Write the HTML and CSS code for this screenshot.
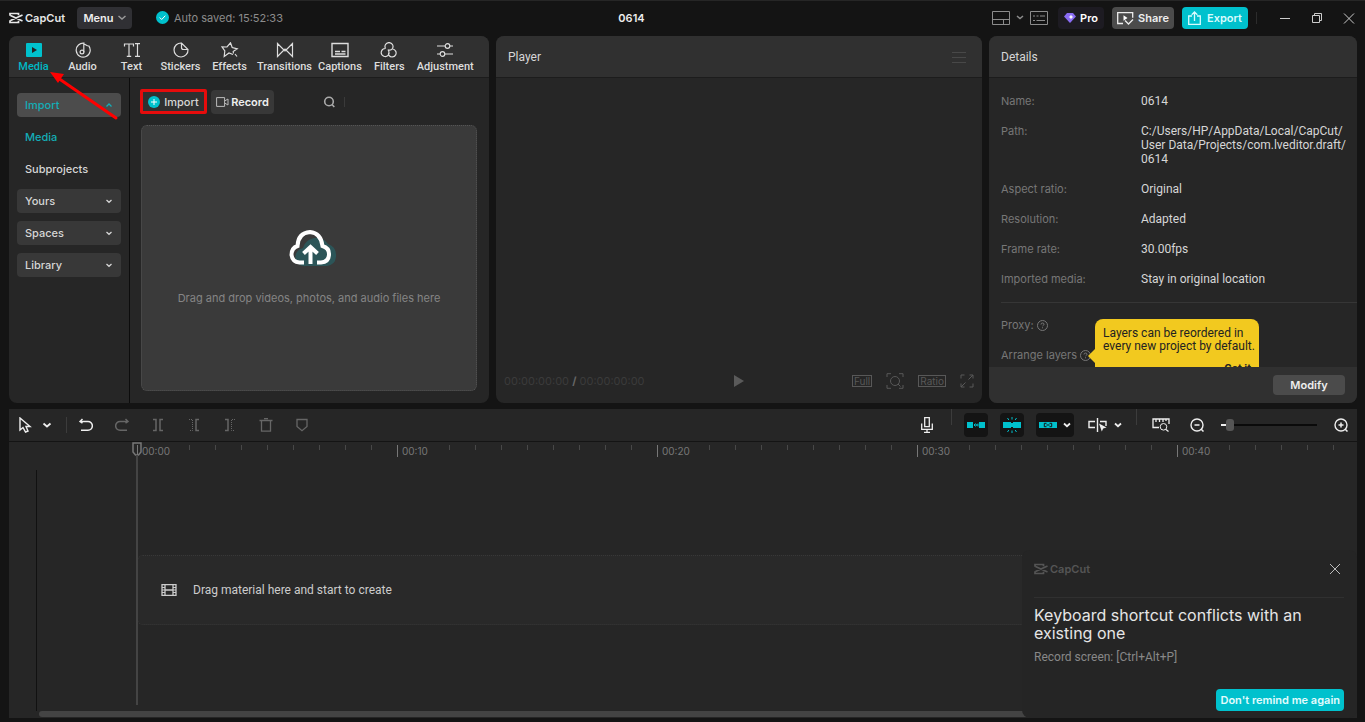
FILE: index.html
```
<!DOCTYPE html>
<html lang="en">
<head>
  <meta charset="UTF-8" />
  <meta name="viewport" content="width=device-width, initial-scale=1" />
  <title>CapCut - 0614</title>
  <link rel="stylesheet" href="styles.css">
</head>
<body>
  <header class="topbar">
    <div class="brand">
      <svg width="14" height="12" viewBox="0 0 14 12"><path d="M1 3.800V1.500h8.500v1.700M1 8.200v2.300h8.500V8.800M1.500 3.500l12 5.500M1.500 8.500l12-5.500"/></svg>
      <span>CapCut</span>
    </div>
    <button class="menu-btn">Menu
      <svg width="8" height="5" viewBox="0 0 8 5"><path d="M.5 1L4 4l3.500-3"/></svg>
    </button>
    <div class="saved">
      <svg width="13" height="13" viewBox="0 0 13 13"><circle cx="6.500" cy="6.500" r="6.500" fill="#00c1cd" stroke="none"/><path d="M3.700 6.500l2 2 3.600-3.800" stroke="#fff"/></svg>
      <span>Auto saved: 15:52:33</span>
    </div>
    <h1 class="project-name">0614</h1>
    <div class="top-actions">
      <button class="icon-btn layout-btn" aria-label="Layout">
        <svg width="18" height="14" viewBox="0 0 18 14"><path d="M.5.500h17v13H.5zM.5 8.500h17M11.500 8.500v5"/></svg>
        <svg width="8" height="14" viewBox="0 0 8 14"><path d="M1 5l3 2.500L7 5" stroke-width="1.500"/></svg>
      </button>
      <button class="icon-btn" aria-label="Shortcuts">
        <svg width="18" height="14" viewBox="0 0 18 14"><path d="M.5.500h17v13H.5zM3 5h2M6.500 5h2M10 5h5M3 9.500h2M6.500 9.500H15"/></svg>
      </button>
      <button class="btn pro">
        <svg width="12" height="10" viewBox="0 0 12 10"><path d="M3 0h6l3 3.500L6 10 0 3.500z" fill="#8a6cf5" stroke="none"/><path d="M7 1.500l.8 1.700 1.700.8-1.700.8L7 6.500l-.8-1.700L4.500 4l1.700-.8z" fill="#fff" stroke="none"/></svg>
        Pro
      </button>
      <button class="btn share">
        <svg width="17" height="14" viewBox="0 0 17 14"><path d="M6 12.500H.7V1.700h15v5M8 9.500l3.500 3.500 4.500-4.500" stroke-width="1.300"/><path d="M6.500 4.300l4 2.700-4 2.700z" fill="#fff" stroke="none"/></svg>
        Share
      </button>
      <button class="btn export">
        <svg width="13" height="14" viewBox="0 0 13 14"><path d="M4 5H.7v8.300h11.600V5H9M6.500 10V1M3.700 3.700L6.500 1l2.800 2.700" stroke-width="1.300"/></svg>
        Export
      </button>
      <span class="top-sep"></span>
      <button class="icon-btn win" aria-label="Minimize">
        <svg width="16" height="16" viewBox="0 0 16 16"><path d="M3 8.500h10"/></svg>
      </button>
      <button class="icon-btn win" aria-label="Restore">
        <svg width="16" height="16" viewBox="0 0 16 16"><path d="M3.500 5.500h7v7h-7zM5.500 5.500v-2h7v7h-2"/></svg>
      </button>
      <button class="icon-btn win" aria-label="Close">
        <svg width="16" height="16" viewBox="0 0 16 16"><path d="M3 3.500l10 10M13 3.500l-10 10"/></svg>
      </button>
    </div>
  </header>

  <main class="workspace">
    <section class="panel media-panel">
      <nav class="tabs">
        <button class="tab active">
          <svg width="18" height="16" viewBox="0 0 18 16"><rect x="1" y="1" width="16" height="14" rx="1" fill="#00c1cd" stroke="none"/><path d="M7 5l5 3-5 3z" fill="#222" stroke="none"/></svg>
          Media
        </button>
        <button class="tab">
          <svg width="18" height="16" viewBox="0 0 18 16"><path d="M10.500 1.200A7 7 0 1 0 14.500 3.500M9.800 10.300V1.800l4 2.200"/><circle cx="8" cy="10" r="1.900"/></svg>
          Audio
        </button>
        <button class="tab">
          <svg width="18" height="16" viewBox="0 0 18 16"><path d="M1.500 4.500V2h9v2.500M6 2v12M3.800 14.300h4.400M12 1.700h5M14.500 2v12M12 14.300h5"/></svg>
          Text
        </button>
        <button class="tab">
          <svg width="18" height="16" viewBox="0 0 18 16"><path d="M9.500 1a7 7 0 1 0 6.500 6.500zM9.500 1v4.500q0 2 2 2H16"/></svg>
          Stickers
        </button>
        <button class="tab">
          <svg width="18" height="16" viewBox="0 0 18 16"><path d="M12 12.500L8 11l-4.800 3.500.6-5.500L1 4.800l5 .2L9.500.8l1.700 4.700 5 1.300-4 2.700.3 2M14 12l2 2.500"/></svg>
          Effects
        </button>
        <button class="tab">
          <svg width="18" height="16" viewBox="0 0 18 16"><path d="M1.500 1.500v13L8 8zM16.500 1.500v13L10 8zM8 8l1 1 1-1M7 9l2-2 2 2"/></svg>
          Transitions
        </button>
        <button class="tab">
          <svg width="18" height="16" viewBox="0 0 18 16"><path d="M1 1.500h16v13H1zM4 9.500h5M10.500 9.500h4M4 12h10.500" stroke-width="1.400"/></svg>
          Captions
        </button>
        <button class="tab">
          <svg width="18" height="16" viewBox="0 0 18 16"><path d="M5.500 6.500a4 4 0 1 1 7 0q-1.500 2.300-4 1.500M5.500 6.500a4 4 0 1 0 3.200 6q1-2-.7-5M12.500 7a4 4 0 1 1-3.500 6.500q-1-1 0-3"/></svg>
          Filters
        </button>
        <button class="tab">
          <svg width="18" height="16" viewBox="0 0 18 16"><path d="M1 4h8M14 4h3M1 12h3M9 12h8"/><circle cx="11.500" cy="4" r="2.300"/><circle cx="6.500" cy="12" r="2.300"/></svg>
          Adjustment
        </button>
      </nav>
      <div class="media-body">
        <aside class="side">
          <button class="side-item selected">Import <svg width="8" height="6" viewBox="0 0 8 6"><path d="M1.500 4.500L4 2l2.500 2.500"/></svg></button>
          <a href="#" class="side-link current">Media</a>
          <a href="#" class="side-link">Subprojects</a>
          <button class="side-item">Yours <svg width="8" height="6" viewBox="0 0 8 6"><path d="M1.500 2L4 4.300 6.500 2"/></svg></button>
          <button class="side-item">Spaces <svg width="8" height="6" viewBox="0 0 8 6"><path d="M1.500 2L4 4.300 6.500 2"/></svg></button>
          <button class="side-item">Library <svg width="8" height="6" viewBox="0 0 8 6"><path d="M1.500 2L4 4.300 6.500 2"/></svg></button>
        </aside>
        <div class="library">
          <div class="library-bar">
            <button class="small-btn import-btn">
              <svg width="12" height="12" viewBox="0 0 12 12"><circle cx="6" cy="6" r="6" fill="#00c1cd" stroke="none"/><path d="M3 6h6M6 3v6" stroke="#fff"/></svg>
              Import
            </button>
            <button class="small-btn record-btn">
              <svg width="13" height="10" viewBox="0 0 13 10"><path d="M.6.600h8v8.800h-8zM8.600 4l3.400-2v6L8.600 6" stroke="#bbb"/></svg>
              Record
            </button>
            <button class="icon-btn search-btn" aria-label="Search">
              <svg width="12" height="12" viewBox="0 0 12 12"><circle cx="6" cy="5.500" r="4.300"/><path d="M9 8.500l2.300 2.500"/></svg>
            </button>
            <span class="search-sep"></span>
          </div>
          <div class="dropzone">
            <svg class="cloud" width="55" height="38" viewBox="-6 0 55 38">
              <path d="M18 37a9 9 0 0 1-3-18A14 14 0 0 1 40 15q9 3 8 13-1 8-9 9z" fill="#2c5558"/>
              <path d="M16 33.500h-4.500q-7-.5-8-7.500 0-7 6-9Q10 4 22 3q11 1 12.500 14 7 2 6.500 9-.5 7-8 7.500H29" fill="none" stroke="#fff" stroke-width="4"/>
              <path d="M22.500 35V19M15.500 24.500l7-6.500 7 6.500" fill="none" stroke="#fff" stroke-width="4"/>
            </svg>
            <p>Drag and drop videos, photos, and audio files here</p>
          </div>
        </div>
      </div>
      <svg class="arrow" width="72" height="52" viewBox="0 0 72 52"><path d="M8 6l58 40" stroke="#f00" stroke-width="3" stroke-linecap="round"/><path d="M0 0l14 2-6 9z" fill="#f00"/></svg>
    </section>

    <section class="panel player-panel">
      <div class="panel-head">
        <h2>Player</h2>
        <button class="icon-btn dim" aria-label="Player menu">
          <svg width="14" height="12" viewBox="0 0 14 12"><path d="M0 1.500h14M0 6.500h14M0 11.500h14"/></svg>
        </button>
      </div>
      <div class="screen"></div>
      <div class="player-bar">
        <span class="time">00:00:00:00 <b>/</b> 00:00:00:00</span>
        <button class="icon-btn play" aria-label="Play">
          <svg width="12" height="14" viewBox="0 0 12 14"><path d="M1 1l10 6-10 6z" fill="#5a5a5a" stroke="none"/></svg>
        </button>
        <div class="player-tools">
          <button class="tag">Full</button>
          <button class="icon-btn" aria-label="Zoom to fit">
            <svg width="18" height="16" viewBox="0 0 18 16"><path d="M1 4V.700h4M13 .700h4V4M1 12v3.300h4M13 15.300h4V12M12 11l2.500 2.500"/><circle cx="9" cy="8" r="4.500"/></svg>
          </button>
          <button class="tag">Ratio</button>
          <button class="icon-btn" aria-label="Full screen">
            <svg width="14" height="14" viewBox="0 0 14 14"><path d="M1 4.500V1h3.500M9.500 1H13v3.500M13 9.500V13H9.500M4.500 13H1V9.500M8.500 5.500L13 1M5.500 8.500L1 13"/></svg>
          </button>
        </div>
      </div>
    </section>

    <section class="panel details-panel">
      <div class="panel-head"><h2>Details</h2></div>
      <div class="details-body">
        <dl class="props">
          <dt>Name:</dt><dd>0614</dd>
          <dt>Path:</dt><dd>C:/Users/HP/AppData/Local/CapCut/<wbr>User Data/Projects/com.lveditor.draft/<wbr>0614</dd>
          <dt>Aspect ratio:</dt><dd>Original</dd>
          <dt>Resolution:</dt><dd>Adapted</dd>
          <dt>Frame rate:</dt><dd>30.00fps</dd>
          <dt>Imported media:</dt><dd>Stay in original location</dd>
        </dl>
        <div class="extra">
          <div class="extra-row">Proxy:
            <svg width="11" height="11" viewBox="0 0 11 11"><circle cx="5.500" cy="5.500" r="5"/><path d="M4 4.500q0-1.500 1.500-1.500T7 4.300q0 .8-1.500 1.700M5.500 7.300v1"/></svg>
          </div>
          <div class="extra-row">Arrange layers
            <svg width="11" height="11" viewBox="0 0 11 11"><circle cx="5.500" cy="5.500" r="5"/><path d="M4 4.500q0-1.500 1.500-1.500T7 4.300q0 .8-1.500 1.700M5.500 7.300v1"/></svg>
          </div>
          <div class="tip">
            <p>Layers can be reordered in every new project by default.</p>
            <button>Got it</button>
          </div>
        </div>
      </div>
      <div class="details-foot"><button class="modify">Modify</button></div>
    </section>
  </main>

  <section class="timeline">
    <div class="toolbar">
      <button class="tool select-tool" aria-label="Select">
        <svg width="14" height="16" viewBox="0 0 14 16"><path d="M2 1v12l3-2.500L7.500 15l2.500-1-2-4.500h4z" stroke-width="1.400"/></svg>
      </button>
      <button class="tool chev" aria-label="Select options">
        <svg width="10" height="6" viewBox="0 0 10 6"><path d="M1.500 1.500L5 4.500l3.500-3" stroke-width="1.800"/></svg>
      </button>
      <span class="tool-sep low"></span>
      <button class="tool" aria-label="Undo">
        <svg width="14" height="14" viewBox="0 0 14 14"><path d="M1 3.500h8a4.300 4.300 0 0 1 0 8.700H2M3.500 1L1 3.500 3.500 5" stroke-width="1.500"/></svg>
      </button>
      <button class="tool off" aria-label="Redo">
        <svg width="14" height="14" viewBox="0 0 14 14"><path d="M13 3.500H5a4.300 4.300 0 0 0 0 8.700h7M10.500 1L13 3.500 10.500 5" stroke-width="1.500"/></svg>
      </button>
      <button class="tool off" aria-label="Split">
        <svg width="12" height="14" viewBox="0 0 12 14"><path d="M1 1.500h3v11H1M11 1.500H8v11h3" stroke-width="1.500"/></svg>
      </button>
      <button class="tool off" aria-label="Delete left">
        <svg width="12" height="14" viewBox="0 0 12 14"><path d="M11 1.500H8v11h3" stroke-width="1.500"/><path d="M1 1.500h3.500v11H1" stroke-dasharray="1 1"/></svg>
      </button>
      <button class="tool off" aria-label="Delete right">
        <svg width="12" height="14" viewBox="0 0 12 14"><path d="M1 1.500h3v11H1" stroke-width="1.500"/><path d="M11 1.500H7.500v11H11" stroke-dasharray="1 1"/></svg>
      </button>
      <button class="tool off" aria-label="Delete">
        <svg width="14" height="14" viewBox="0 0 14 14"><path d="M.5 2.500h13M2.500 2.500v10.700h9V2.500M5 .700h4" stroke-width="1.300"/></svg>
      </button>
      <button class="tool off" aria-label="Marker">
        <svg width="12" height="14" viewBox="0 0 12 14"><path d="M1 1.500h10v7L6 12.700 1 8.500z" stroke-width="1.300"/></svg>
      </button>

      <button class="tool mic" aria-label="Record voiceover">
        <svg width="12" height="16" viewBox="0 0 12 16"><path d="M3.700.700h4.600v9H3.700zM.7 6.500v5.800h10.600V6.500M6 12.300v3M3 15.300h6" stroke-width="1.300"/></svg>
      </button>
      <span class="tool-sep"></span>
      <button class="tool on" aria-label="Main track magnet">
        <svg width="20" height="8" viewBox="0 0 20 8"><path d="M1 1h6v6H1zM13 1h6v6h-6z" fill="#00c1cd" stroke="none"/><path d="M9 4h4M9.500 2.500L8 4l1.500 1.500M12 2.500L10.500 4 12 5.500" stroke="#00c1cd"/></svg>
      </button>
      <button class="tool on" aria-label="Auto snapping">
        <svg width="18" height="18" viewBox="0 0 18 18"><path d="M0 6h8v6H0zM10 6h8v6h-8zM8 7h2v4H8z" fill="#00c1cd" stroke="none"/><path d="M9 1v2.500M9 14.500V17M4.500 2l1.300 2M13.500 2l-1.300 2M4.500 16l1.300-2M13.500 16l-1.300-2" stroke="#00c1cd"/></svg>
      </button>
      <button class="tool on link-tool" aria-label="Linkage">
        <svg width="18" height="8" viewBox="0 0 18 8"><path d="M0 1h18v6H0z" fill="#00c1cd" stroke="none"/><path d="M7.500 2.300H5.300v3.400h2.200M10.500 2.300h2.200v3.400h-2.200M7.500 4h3" stroke="#141414"/></svg>
        <svg width="8" height="6" viewBox="0 0 8 6"><path d="M1 1.500l3 2.700 3-2.700" stroke-width="1.800"/></svg>
      </button>
      <button class="tool axis-tool" aria-label="Preview axis">
        <svg width="20" height="16" viewBox="0 0 20 16"><path d="M7 4.500H1v6h6M12 4.500h6V9M9.500 1v14" stroke-width="1.400"/><path d="M11 6.500l7.500 4-3.300 1-1.400 3z" fill="#eee" stroke="none"/></svg>
        <svg width="8" height="6" viewBox="0 0 8 6"><path d="M1 1.500l3 2.700 3-2.700" stroke-width="1.800"/></svg>
      </button>
      <span class="tool-sep"></span>
      <button class="tool" aria-label="Fit timeline">
        <svg width="18" height="14" viewBox="0 0 18 14"><path d="M7 9.500H1V1h16v5M4 1v3M7.500 1v3M11 1v3M14 1v2M14 11.500l2.500 2" stroke-width="1.300"/><circle cx="11.500" cy="8.800" r="3.300"/></svg>
      </button>
      <button class="tool" aria-label="Zoom out">
        <svg width="14" height="14" viewBox="0 0 14 14"><circle cx="7" cy="7" r="6" stroke-width="1.400"/><path d="M4.500 7h5M11 11l2.500 2.500" stroke-width="1.500"/></svg>
      </button>
      <input class="zoom" type="range" min="0" max="100" value="6" aria-label="Timeline zoom">
      <button class="tool" aria-label="Zoom in">
        <svg width="14" height="14" viewBox="0 0 14 14"><circle cx="7" cy="7" r="6" stroke-width="1.400"/><path d="M4.500 7h5M7 4.500v5M11 11l2.500 2.500" stroke-width="1.500"/></svg>
      </button>
    </div>

    <div class="tracks">
      <div class="ruler">
        <span class="mark">00:00</span>
        <span class="mark">00:10</span>
        <span class="mark">00:20</span>
        <span class="mark">00:30</span>
        <span class="mark">00:40</span>
      </div>
      <div class="lanes">
        <div class="lane-head"></div>
        <div class="lane">
          <svg width="16" height="12" viewBox="0 0 16 12"><path d="M1 .700h14v10.600H1zM4 1v10M12 1v10M4 6h8" stroke-width="1.300"/><path d="M1 3.500h3M1 6h3M1 8.500h3M12 3.500h3M12 6h3M12 8.500h3"/></svg>
          <span>Drag material here and start to create</span>
        </div>
      </div>
      <div class="scrollbar"></div>
      <div class="playhead">
        <svg width="10" height="14" viewBox="0 0 10 14"><path d="M1 1h8v9l-2.500 3h-3L1 10z" stroke-width="1.500"/></svg>
      </div>
    </div>

    <div class="toast">
      <div class="toast-head">
        <div class="brand">
          <svg width="14" height="12" viewBox="0 0 14 12"><path d="M1 3.800V1.500h8.500v1.700M1 8.200v2.300h8.500V8.800M1.500 3.500l12 5.500M1.500 8.500l12-5.500"/></svg>
          <span>CapCut</span>
        </div>
        <button class="icon-btn" aria-label="Close message">
          <svg width="12" height="12" viewBox="0 0 12 12"><path d="M1 1l10 10M11 1L1 11"/></svg>
        </button>
      </div>
      <h3>Keyboard shortcut conflicts with an existing one</h3>
      <p>Record screen: [Ctrl+Alt+P]</p>
      <button class="toast-btn">Don't remind me again</button>
    </div>
  </section>
</body>
</html>
```
FILE: styles.css
```
* { box-sizing: border-box; }
body { margin: 0; height: 100vh; display: grid; grid-template-columns: minmax(0, 1fr); grid-template-rows: 35px minmax(0, 1fr) 309px; padding: 0 8px 4px 9px; background: #141414; color: #d6d6d6; font: 12px/14px Roboto, "Liberation Sans", sans-serif; overflow: hidden; border-top: 1px solid #262626; }
h1, h2, h3, p, dl, dd { margin: 0; font-size: 12px; font-weight: 400; }
button { font: inherit; color: inherit; background: none; border: 0; padding: 0; display: flex; align-items: center; justify-content: center; }
svg { fill: none; stroke: currentColor; flex: none; display: block; }
a { color: inherit; text-decoration: none; }

/* small UI text */
.topbar, .side, .small-btn, .dropzone p, .time, .tag, .props dt, .extra, .modify, .mark, .toast .brand, .toast h3, .toast-btn { font-family: Inter, "Liberation Sans", sans-serif; font-size: 11px; }

/* top bar */
.topbar { display: flex; align-items: center; padding-bottom: 2px; }
.brand { display: flex; align-items: center; gap: 2px; width: 68px; font-weight: 600; color: #e8e8e8; }
.brand svg { stroke-width: 1.7; }
.menu-btn { height: 22px; width: 55px; gap: 4px; background: #303034; border-radius: 4px; font-weight: 600; color: #eee; }
.menu-btn svg { color: #999; stroke-width: 1.5; }
.saved { display: flex; align-items: center; gap: 5px; margin-left: 24px; color: #8c8c8c; }
.project-name { flex: 1; text-align: center; padding-right: 12px; font-size: 11px; font-weight: 600; color: #eee; }
.top-actions { display: flex; align-items: center; gap: 8px; }
.icon-btn { color: #8c8c8c; }
.layout-btn { gap: 6px; margin-right: -2px; }
.btn { height: 22px; gap: 4px; border-radius: 4px; font-weight: 600; color: #fff; }
.pro { width: 46px; margin-left: 2px; background: #1d1b22; }
.share { width: 62px; background: #4b4b4b; color: #eee; }
.export { width: 66px; gap: 6px; background: #00c1cd; color: #d8fbfd; }
.top-sep { width: 1px; height: 12px; margin-right: 12px; background: #2c2c2c; }
.win { color: #ccc; }
.win + .win { margin-left: 8px; }

/* panels */
.workspace { display: grid; grid-template-columns: 480px minmax(0, 1fr) 368px; gap: 7px; padding-bottom: 6px; min-height: 0; }
.panel { position: relative; display: flex; flex-direction: column; min-height: 0; background: #262626; border-radius: 8px; overflow: hidden; }
.panel-head { display: flex; align-items: center; justify-content: space-between; height: 42px; padding: 0 16px 0 12px; background: #303030; border-bottom: 1px solid #1c1c1c; flex: none; }
.dim { color: #484848; }

.tabs { display: flex; height: 42px; padding: 6px 0 0; background: #303030; border-bottom: 1px solid #1c1c1c; flex: none; }
.tab { flex-direction: column; justify-content: flex-start; gap: 2px; min-width: 49px; padding: 0 3px; font-size: 11px; font-weight: 500; color: #ddd; }
.tab svg { stroke-width: 1.2; }
.tab.active { color: #00b8c4; }
.media-body { display: flex; flex: 1; min-height: 0; }
.side { display: flex; flex-direction: column; gap: 8px; width: 121px; padding: 15px 8px; border-right: 1px solid #0c0c0c; font-weight: 500; }
.side-item { justify-content: space-between; height: 24px; padding: 0 8px; border-radius: 4px; background: #383838; }
.side-item.selected { background: #4c4c4c; color: #14adb7; }
.side-item svg { stroke-width: 1.3; }
.side-link { height: 24px; padding: 5px 8px; }
.current { color: #14adb7; }
.library { flex: 1; display: flex; flex-direction: column; gap: 11px; padding: 11px 12px 12px 10px; }
.library-bar { display: flex; align-items: center; height: 25px; }
.small-btn { gap: 4px; border-radius: 4px; font-weight: 500; }
.import-btn { width: 67px; height: 25px; border: 3px solid #e60c0c; border-radius: 2px; background: #303030; }
.record-btn { width: 63px; height: 24px; margin-left: 4px; gap: 2px; background: #383838; color: #eee; font-weight: 600; }
.search-btn { margin-left: 49px; color: #aaa; }
.search-btn svg { stroke-width: 1.6; }
.search-sep { width: 1px; height: 10px; margin-left: 9px; background: #3a3a3a; }
.dropzone { flex: 1; display: flex; flex-direction: column; align-items: center; justify-content: center; gap: 24px; padding-top: 17px; margin-left: 1px; background: #3a3a3a; border: 1px dotted #555; border-radius: 6px; color: #858585; }
.cloud { stroke: none; }
.arrow { position: absolute; left: 41px; top: 36px; stroke: none; pointer-events: none; }

/* player */
.screen { flex: 1; }
.player-bar { display: grid; grid-template-columns: 1fr auto 1fr; align-items: center; height: 44px; padding: 0 8px; }
.time { color: #3b3b3b; }
.time b { color: #666; }
.player-tools { display: flex; justify-content: flex-end; align-items: center; gap: 14px; }
.player-tools .icon-btn { color: #585858; }
.player-tools .tag { height: 12px; padding: 0 1px; border: 1px solid #585858; color: #585858; font-size: 10px; }

/* details */
.details-body { flex: 1; min-height: 0; overflow: hidden; }
.props { display: grid; grid-template-columns: 140px 1fr; row-gap: 16px; margin: 0 0 0 12px; padding: 16px 8px 16px 0; border-bottom: 1px solid #363636; }
.props dt, .extra { color: #777; }
.extra { position: relative; display: flex; flex-direction: column; gap: 16px; padding: 15px 12px; }
.extra-row { display: flex; align-items: center; gap: 3px; }
.tip { position: absolute; left: 106px; top: 16px; width: 164px; height: 64px; padding: 8px; background: #f2c91f; border-radius: 8px; color: #222; font-family: Roboto, "Liberation Sans", sans-serif; line-height: 13px; }
.tip::before { content: ""; position: absolute; left: -7px; top: 30px; border: 7px solid transparent; border-left: 0; border-right-color: #f2c91f; }
.tip p { margin-right: -6px; }
.tip button { margin: 9px 0 0 auto; font-weight: 700; font-size: 11px; }
.details-foot { display: flex; justify-content: flex-end; align-items: center; height: 36px; padding-right: 12px; background: #303030; flex: none; }
.modify { width: 72px; height: 20px; border-radius: 4px; background: #4b4b4b; color: #eee; font-weight: 600; }

/* timeline */
.timeline { position: relative; display: flex; flex-direction: column; background: #262626; }
.toolbar { display: flex; align-items: center; gap: 12px; height: 33px; padding: 0 4px; border-bottom: 1px solid #141414; flex: none; }
.tool { width: 24px; height: 24px; border-radius: 4px; color: #eee; flex: none; }
.tool.off { color: #666; }
.select-tool { margin-right: -14px; }
.tool.chev { margin-right: -5px; }
.tool-sep { width: 1px; height: 16px; align-self: flex-start; background: #3c3c3c; }
.tool-sep.low { align-self: center; margin-right: -5px; }
.mic { margin-left: auto; }
.tool.on { background: #141414; }
.tool.link-tool, .tool.axis-tool { width: 38px; gap: 6px; }
.zoom { appearance: none; width: 96px; height: 12px; margin: 0; background: linear-gradient(90deg, #eee 8px, #0a0a0a 8px) center / 100% 2px no-repeat; }
.zoom::-webkit-slider-thumb { appearance: none; width: 8px; height: 12px; border-radius: 3px; background: #555; }

.tracks { position: relative; flex: 1; display: flex; flex-direction: column; }
.ruler { display: flex; height: 28px; padding: 3px 0 0 128px; overflow: hidden; }
.ruler .mark { flex: 0 0 260px; height: 12px; padding-left: 4px; border-left: 1px solid #777; color: #777; font-size: 10px; line-height: 12px; background: repeating-linear-gradient(90deg, transparent 0 25px, #484848 25px 26px) 26px 0 / 210px 5px no-repeat; }
.lanes { flex: 1; display: grid; grid-template-columns: 28px 1fr; }
.lane-head { border-right: 1px solid #111; }
.lane { display: flex; align-items: center; gap: 16px; height: 70px; margin: 85px 0 0 100px; padding-left: 23px; background: #292929; border: 1px dotted #383838; border-radius: 6px; color: #ccc; }
.scrollbar { height: 6px; margin: 0 8px 1px 30px; border-radius: 3px; background: #444; }
.playhead { position: absolute; left: 123px; top: 0; bottom: 13px; width: 10px; color: #777; }
.playhead::after { content: ""; position: absolute; left: 4px; top: 13px; bottom: 0; width: 2px; background: #444; }

.toast { position: absolute; right: 0; bottom: 0; width: 335px; padding: 12px 13px 7px 12px; background: #252525; border-radius: 8px; }
.toast-head { display: flex; align-items: center; justify-content: space-between; padding: 0 3px 21px 0; border-bottom: 1px solid #303030; }
.toast .brand { color: #555; }
.toast .icon-btn { color: #bbb; }
.toast h3 { margin-top: 8px; font-size: 16px; line-height: 18px; color: #e6e6e6; }
.toast p { margin-top: 8px; color: #888; }
.toast-btn { height: 22px; margin: 25px 0 0 auto; padding: 0 4px; border-radius: 4px; background: #00c1cd; color: #e2fcfd; font-weight: 600; }
```
